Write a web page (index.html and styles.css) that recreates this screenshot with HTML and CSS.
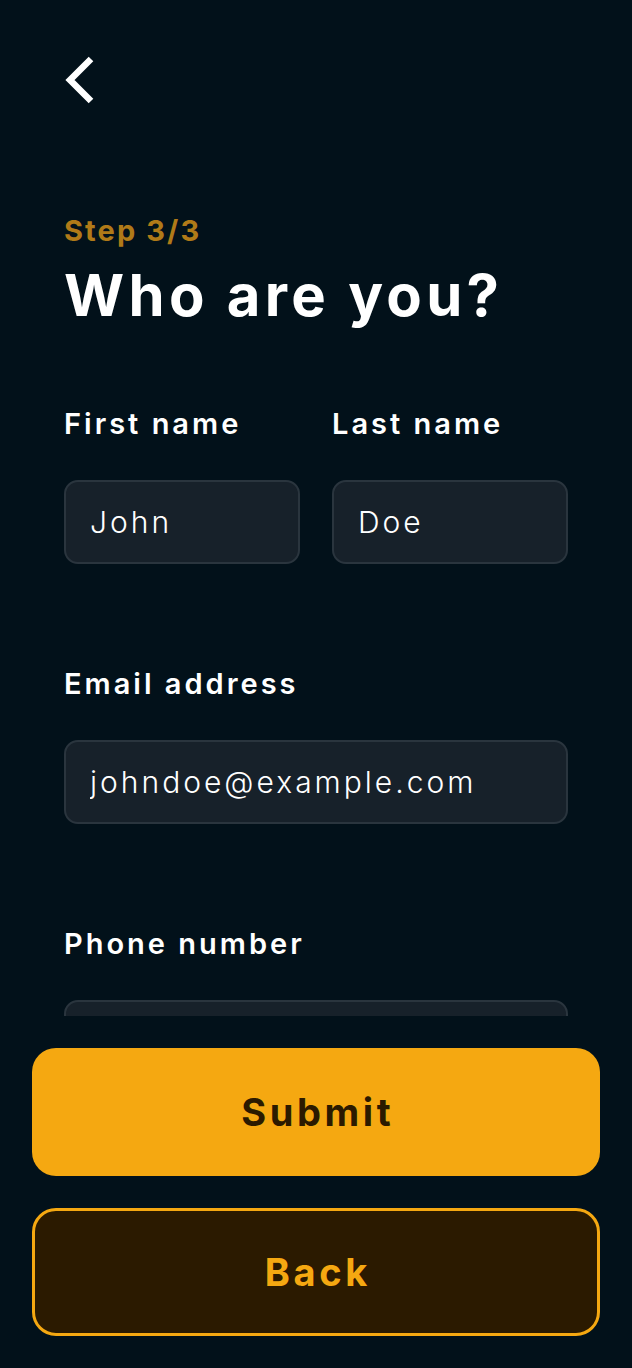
FILE: index.html
```html
<!DOCTYPE html>
<html lang="en">
<head>
    <meta charset="UTF-8">
    <meta name="viewport" content="width=device-width, initial-scale=1.0">
    <title>Who are you?</title>
    <link rel="stylesheet" href="styles.css">
</head>
<body>
    <div class="screen">
        <div class="scroll">
            <a class="back-link" href="#" aria-label="Back">
                <svg width="40" height="56" viewBox="0 0 40 56">
                    <path d="M27 3 L6 24 L27 45" fill="none" stroke="#fff" stroke-width="6.5" stroke-linejoin="miter"/>
                </svg>
            </a>

            <p class="step">Step 3/3</p>
            <h1>Who are you?</h1>

            <div class="row">
                <label class="field">
                    <span class="label">First name</span>
                    <input type="text" value="John">
                </label>
                <label class="field">
                    <span class="label">Last name</span>
                    <input type="text" value="Doe">
                </label>
            </div>

            <label class="field">
                <span class="label">Email address</span>
                <input type="email" value="johndoe@example.com">
            </label>

            <label class="field">
                <span class="label">Phone number</span>
                <input type="tel" value="">
            </label>
        </div>

        <div class="actions">
            <button class="btn primary">Submit</button>
            <button class="btn secondary">Back</button>
        </div>
    </div>
</body>
</html>
```

FILE: styles.css
```css
/* Base */
* { margin: 0; padding: 0; box-sizing: border-box; font-family: Inter, "Open Sans", sans-serif; }
body { background: #02111a; color: #fff; }
.screen { height: 1368px; display: flex; flex-direction: column; }

/* Scrollable form area */
.scroll { height: 1016px; overflow: hidden; padding: 0 64px; display: flex; flex-direction: column; }
.back-link { display: block; width: 40px; height: 56px; margin-top: 56px; }

.step { margin-top: 101px; font-size: 29px; font-weight: 700; color: #b07a18; line-height: 36px; letter-spacing: 2.1px; }
h1 { margin-top: 12px; font-size: 58px; font-weight: 700; line-height: 68px; letter-spacing: 4.3px; }

.row { display: flex; gap: 32px; margin-top: 77px; }
.row .field { flex: 1; margin-top: 0; }
.field { display: flex; flex-direction: column; margin-top: 102px; }
.label { font-size: 29px; font-weight: 600; line-height: 36px; letter-spacing: 3px; }

input {
    margin-top: 38px;
    height: 84px;
    width: 100%;
    padding: 0 24px;
    background: #17212a;
    border: 2px solid #2a353e;
    border-radius: 14px;
    color: #fff;
    font-size: 30px;
    font-weight: 300;
    letter-spacing: 3px;
    outline: none;
}

/* Bottom buttons */
.actions { display: flex; flex-direction: column; gap: 32px; padding: 32px; }
.btn { height: 128px; border-radius: 24px; font-size: 38px; font-weight: 700; letter-spacing: 3.6px; padding-left: 3.6px; cursor: pointer; }
.primary { background: #f5a811; color: #2b1a00; border: none; }
.secondary { background: #2b1a00; color: #f5a811; border: 3px solid #f5a811; }
```
